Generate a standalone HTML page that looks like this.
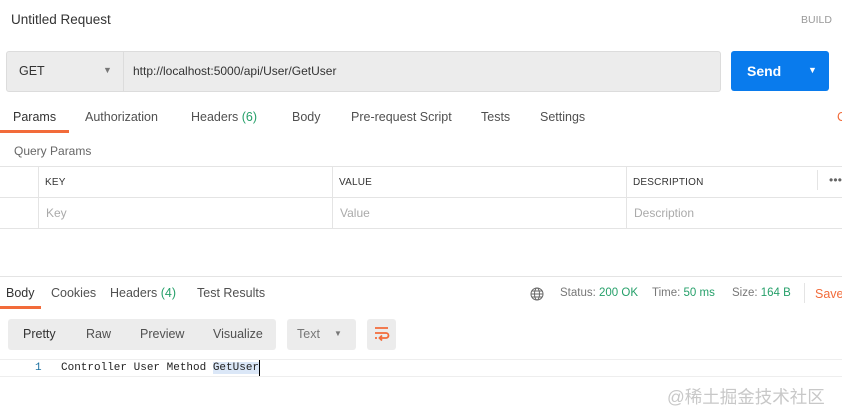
<!DOCTYPE html><html><head><style>
body{margin:0;width:842px;height:418px;background:#fff;font-family:"Liberation Sans",sans-serif;position:relative;overflow:hidden;color:#505050}
div,span{position:absolute}
.t{font-size:12.5px;color:#505050;white-space:nowrap}
.g{color:#26a06a}
.hl{height:1px;background:#e4e4e4}
.vl{width:1px;background:#e4e4e4}
.th{font-size:10px;color:#333;letter-spacing:.2px}
.ph{font-size:12px;color:#aaa}
</style></head><body>
<span class="t" style="left:11px;top:12px;font-size:13.5px;color:#333">Untitled Request</span>
<span class="t" style="left:801px;top:14px;font-size:10.5px;color:#999">BUILD</span>
<div style="left:6px;top:51px;width:713px;height:39px;background:#ececec;border:1px solid #dcdcdc;border-radius:3px"></div>
<div class="vl" style="left:123px;top:52px;height:39px;background:#dcdcdc"></div>
<span class="t" style="left:19px;top:64px;color:#333">GET</span>
<span class="t" style="left:103px;top:65px;font-size:9px;color:#777">▼</span>
<span class="t" style="left:133px;top:64px;color:#333;font-size:12px">http://localhost:5000/api/User/GetUser</span>
<div style="left:731px;top:51px;width:98px;height:40px;background:#097bed;border-radius:3px"></div>
<span class="t" style="left:747px;top:63px;color:#fff;font-weight:bold;font-size:14px">Send</span>
<span class="t" style="left:808px;top:65px;color:#fff;font-size:9px">▼</span>
<span class="t" style="left:13px;top:110px;color:#333">Params</span>
<span class="t" style="left:85px;top:110px">Authorization</span>
<span class="t" style="left:191px;top:110px">Headers <span class="g" style="position:static">(6)</span></span>
<span class="t" style="left:292px;top:110px">Body</span>
<span class="t" style="left:351px;top:110px">Pre-request Script</span>
<span class="t" style="left:481px;top:110px">Tests</span>
<span class="t" style="left:540px;top:110px">Settings</span>
<span class="t" style="left:837px;top:110px;color:#f26b3a">C</span>
<div style="left:0;top:130px;width:69px;height:3px;background:#f26b3a"></div>
<span class="t" style="left:14px;top:144px;font-size:12px;color:#666">Query Params</span>
<div class="hl" style="left:0;top:166px;width:842px"></div>
<div class="hl" style="left:0;top:197px;width:842px"></div>
<div class="hl" style="left:0;top:228px;width:842px"></div>
<div class="vl" style="left:38px;top:166px;height:62px"></div>
<div class="vl" style="left:332px;top:166px;height:62px"></div>
<div class="vl" style="left:626px;top:166px;height:62px"></div>
<div class="vl" style="left:817px;top:170px;height:20px"></div>
<span class="th" style="left:45px;top:177px">KEY</span>
<span class="th" style="left:339px;top:177px">VALUE</span>
<span class="th" style="left:633px;top:177px">DESCRIPTION</span>
<span class="th" style="left:829px;top:173px;font-size:12px;color:#666">•••</span>
<span class="ph" style="left:46px;top:206px">Key</span>
<span class="ph" style="left:340px;top:206px">Value</span>
<span class="ph" style="left:634px;top:206px">Description</span>
<div class="hl" style="left:0;top:276px;width:842px"></div>
<span class="t" style="left:6px;top:286px;color:#333">Body</span>
<span class="t" style="left:51px;top:286px">Cookies</span>
<span class="t" style="left:110px;top:286px">Headers <span class="g" style="position:static">(4)</span></span>
<span class="t" style="left:197px;top:286px">Test Results</span>
<div style="left:0;top:306px;width:41px;height:3px;background:#f26b3a"></div>
<svg style="position:absolute;left:530px;top:287px" width="14" height="14" viewBox="0 0 14 14" fill="none" stroke="#666" stroke-width="1"><circle cx="7" cy="7" r="6"/><ellipse cx="7" cy="7" rx="2.5" ry="6"/><path d="M1 7h12M2 4h10M2 10h10"/></svg>
<span class="t" style="left:560px;top:287px;font-size:11.5px;color:#777">Status: <span class="g" style="position:static">200 OK</span></span>
<span class="t" style="left:652px;top:287px;font-size:11.5px;color:#777">Time: <span class="g" style="position:static">50 ms</span></span>
<span class="t" style="left:732px;top:287px;font-size:11.5px;color:#777">Size: <span class="g" style="position:static">164 B</span></span>
<div class="vl" style="left:804px;top:283px;height:20px"></div>
<span class="t" style="left:815px;top:287px;color:#f26b3a">Save</span>
<div style="left:8px;top:319px;width:268px;height:31px;background:#ececec;border-radius:3px"></div>
<span class="t" style="left:23px;top:327px;color:#333">Pretty</span>
<span class="t" style="left:86px;top:327px">Raw</span>
<span class="t" style="left:140px;top:327px">Preview</span>
<span class="t" style="left:213px;top:327px">Visualize</span>
<div style="left:287px;top:319px;width:69px;height:31px;background:#ececec;border-radius:3px"></div>
<span class="t" style="left:297px;top:327px;color:#777">Text</span>
<span class="t" style="left:334px;top:329px;font-size:8px;color:#777">▼</span>
<div style="left:367px;top:319px;width:29px;height:31px;background:#ececec;border-radius:3px"></div>
<svg style="position:absolute;left:373px;top:325px" width="17" height="18" viewBox="0 0 17 18" fill="none" stroke="#f26b3a" stroke-width="1.8"><path d="M2 3h13M2 8h11a2.5 2.5 0 0 1 0 5H7M9 10.5l-2.5 2.5 2.5 2.5M2 13h2"/></svg>
<div class="hl" style="left:0;top:359px;width:842px;background:#eee"></div>
<div class="hl" style="left:0;top:376px;width:842px;background:#eee"></div>
<span class="t" style="left:35px;top:362px;font-family:'Liberation Mono',monospace;font-size:11px;color:#1a6fa0">1</span>
<span class="t" style="left:61px;top:362px;font-family:'Liberation Mono',monospace;font-size:11px;color:#222">Controller User Method <span style="position:static;background:#dbe7f7">GetUser</span></span>
<div style="left:259px;top:360px;width:1px;height:16px;background:#000"></div>
<span class="t" style="left:667px;top:384px;font-size:17.5px;color:#c8c8c8;font-family:'Liberation Sans','Noto Sans CJK SC',sans-serif">@稀土掘金技术社区</span>
</body></html>
